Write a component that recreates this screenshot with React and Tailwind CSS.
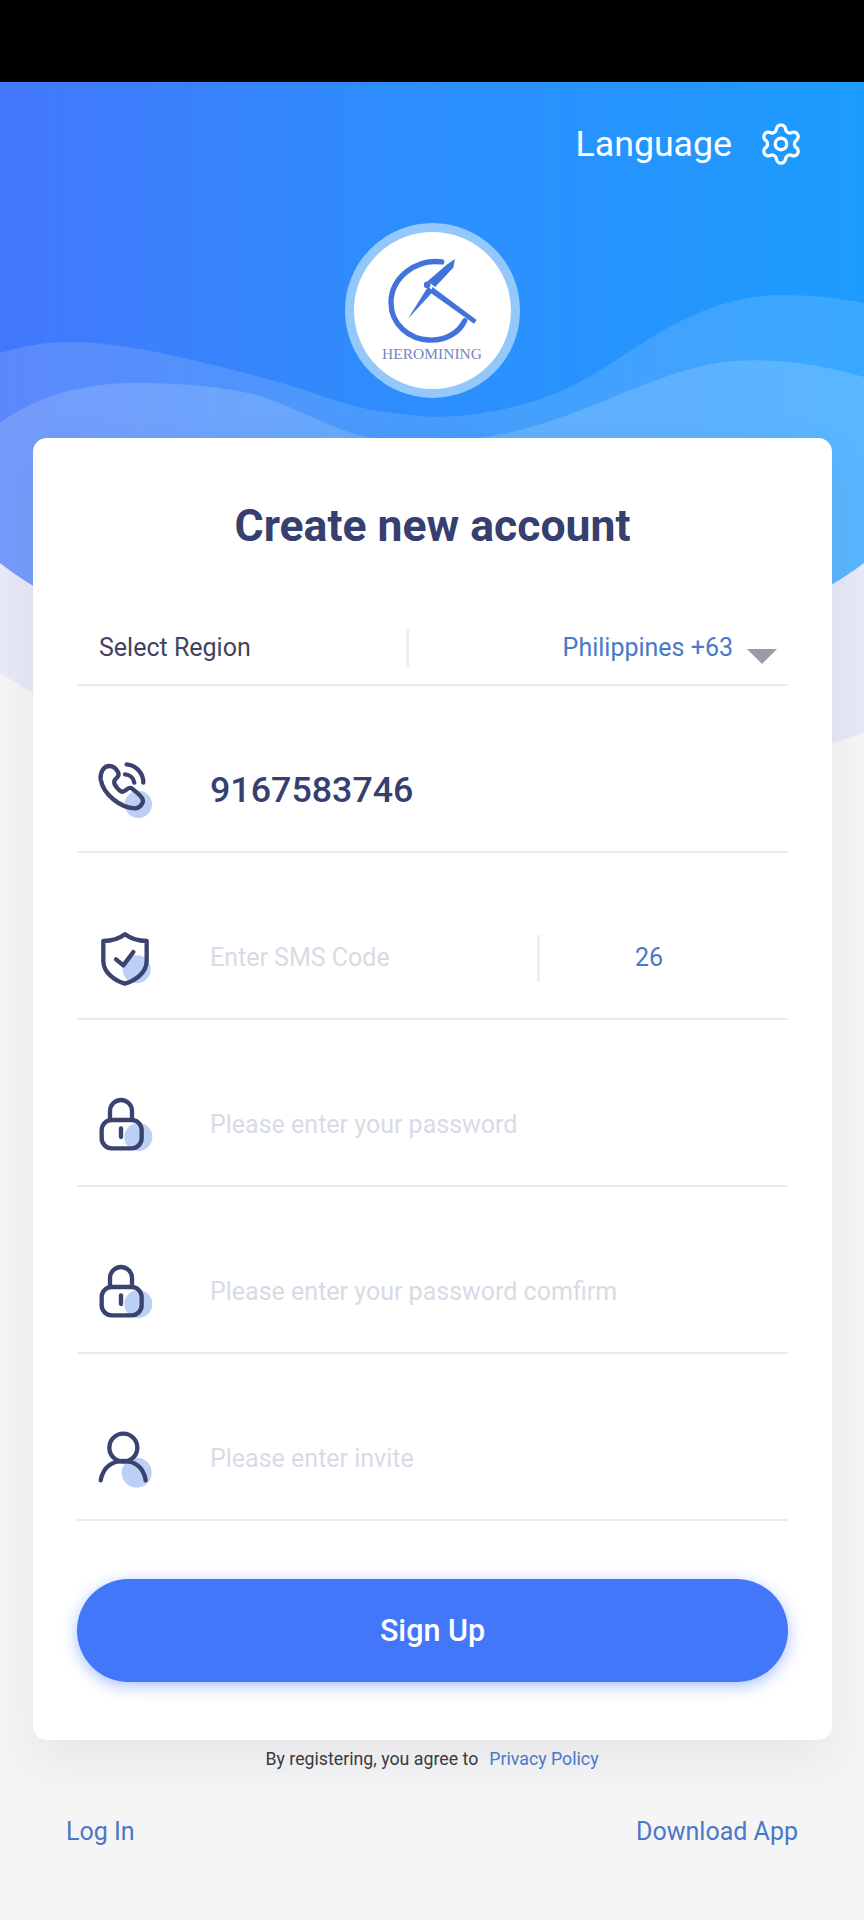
import { Settings } from 'lucide-react'

const font = { fontFamily: 'Roboto, sans-serif' }

function Waves() {
  return (
    <svg className="absolute top-0 left-0 w-[864px] h-[800px]" viewBox="0 0 864 800">
      <defs>
        <linearGradient id="head" x1="0" y1="0" x2="1" y2="0">
          <stop offset="0" stopColor="#4477fb" />
          <stop offset="0.45" stopColor="#2e8dfd" />
          <stop offset="1" stopColor="#1d9cff" />
        </linearGradient>
        <clipPath id="blue">
          <path d="M0 82H864V563C760 640 600 680 432 680C260 680 100 640 0 563Z" />
        </clipPath>
      </defs>
      <path d="M0 500H864V733L832 743C600 800 200 760 33 693L0 673Z" fill="#e7e9f6" />
      <path d="M0 82H864V563C760 640 600 680 432 680C260 680 100 640 0 563Z" fill="url(#head)" />
      <g clipPath="url(#blue)">
        <path
          d="M0 353C25 345 50 342 72 342C130 342 215 365 275 381C320 394 350 408 386 412C420 417 440 418 468 415C510 410 545 400 578 383C620 360 650 335 689 317C720 303 750 295 782 295C810 295 840 298 864 303V700H0Z"
          fill="#ffffff"
          fillOpacity="0.13"
        />
        <path
          d="M0 423C25 405 50 395 72 390C100 384 125 382 149 383C185 384 215 386 248 393C290 403 320 424 358 435C400 445 450 445 496 435C535 428 570 415 606 400C650 382 690 365 733 361C780 358 825 365 864 377V700H0Z"
          fill="#ffffff"
          fillOpacity="0.16"
        />
      </g>
    </svg>
  )
}

function Logo() {
  return (
    <div className="w-[175px] h-[175px] rounded-full bg-white border-[9px] border-[#92c8fa] flex flex-col items-center pt-[21px]">
      <svg className="w-[107px] h-[93px] shrink-0" viewBox="240 160 320 280">
        <path
          d="M428 187C350 176 275 235 275 310C275 375 330 420 390 422C440 424 480 400 497 364"
          fill="none"
          stroke="#4272dc"
          strokeWidth="16"
          strokeLinecap="round"
        />
        <path d="M467 178L463 204L408 262L385 245L442 196Z" fill="#4272dc" />
        <path d="M386 262L404 274L326 358Z" fill="#4272dc" />
        <path d="M400 262L533 362L525 373L394 280Z" fill="#4272dc" />
        <circle cx="384" cy="256" r="10" fill="#4272dc" />
      </svg>
      <span
        className="text-[15.5px] leading-[16px] text-[#7585bd] whitespace-nowrap"
        style={{ fontFamily: '"Liberation Serif", serif' }}
      >
        HEROMINING
      </span>
    </div>
  )
}

const navy = '#3a4270'
const soft = '#bcd0f6'

function PhoneIcon() {
  return (
    <svg className="w-[60px] h-[60px] shrink-0" viewBox="75 90 180 180" fill="none" stroke={navy} strokeWidth="13" strokeLinecap="round" strokeLinejoin="round">
      <circle cx="205" cy="220" r="41" fill={soft} stroke="none" />
      <path d="M118 105C100 105 90 125 92 145C100 190 150 230 195 232C210 232 222 215 218 205C215 195 195 180 185 172C175 165 165 185 155 182C145 178 130 160 133 150C136 140 150 138 145 125C140 115 130 105 118 105Z" />
      <path d="M170 100A55 55 0 0 1 220 155" />
      <path d="M165 130A30 30 0 0 1 193 155" />
    </svg>
  )
}

function ShieldIcon() {
  return (
    <svg className="w-[60px] h-[60px] shrink-0" viewBox="75 591 180 180" fill="none" stroke={navy} strokeWidth="13" strokeLinecap="round" strokeLinejoin="round">
      <circle cx="200" cy="715" r="42" fill={soft} stroke="none" />
      <path d="M165 610C145 625 125 630 100 630L100 690C100 725 135 750 165 758C195 750 230 725 230 690L230 630C205 630 185 625 165 610Z" />
      <path d="M138 685L160 703L190 663" />
    </svg>
  )
}

function LockIcon() {
  return (
    <svg className="w-[60px] h-[60px] shrink-0" viewBox="75 132 180 180" fill="none" stroke={navy} strokeWidth="13" strokeLinecap="round" strokeLinejoin="round">
      <circle cx="205" cy="258" r="42" fill={soft} stroke="none" />
      <rect x="95" y="207" width="120" height="85" rx="30" />
      <path d="M120 207V180A33 33 0 0 1 186 180V207" />
      <path d="M153 232V258" />
    </svg>
  )
}

function UserIcon() {
  return (
    <svg className="w-[60px] h-[60px] shrink-0" viewBox="75 1134 180 180" fill="none" stroke={navy} strokeWidth="13" strokeLinecap="round" strokeLinejoin="round">
      <circle cx="200" cy="1265" r="45" fill={soft} stroke="none" />
      <circle cx="160" cy="1190" r="42" />
      <path d="M92 1288C100 1245 130 1230 160 1230C190 1230 220 1245 227 1288" />
    </svg>
  )
}

function Row({ icon, placeholder, value, children }) {
  return (
    <div className="h-[167px] pt-[45px] flex items-center pl-[18px] border-b-2 border-[#ebebee]">
      {icon}
      <input
        readOnly
        value={value ?? ''}
        placeholder={placeholder}
        className={`ml-[55px] flex-1 min-w-0 bg-transparent outline-none placeholder:text-[#d8dbe6] ${value ? 'font-medium text-[35.8px] text-[#363f70]' : 'text-[25px] text-[#363f70]'}`}
      />
      {children}
    </div>
  )
}

export default function App() {
  return (
    <div className="relative w-[864px] h-[1920px] overflow-hidden bg-[#f5f5f6]" style={font}>
      <Waves />
      <div className="relative flex flex-col">
        <div className="h-[82px] bg-black" />
        <div className="h-[124px] pt-[2px] flex items-center justify-end gap-[26px] pr-[60px] text-white">
          <span className="text-[35.7px]">Language</span>
          <Settings size={46} strokeWidth={1.7} className="-mt-[2px]" />
        </div>
        <div className="mt-[17px] flex justify-center">
          <Logo />
        </div>
        <div className="mt-[40px] ml-[33px] mr-[32px] bg-white rounded-[14px] px-[44px] pt-[61px] pb-[58px] shadow-[0_20px_50px_rgba(60,60,90,0.08)]">
          <h1 className="text-center text-[44.5px] leading-[54px] font-bold text-[#363f70]">Create new account</h1>
          <div className="h-[133px] pt-[59px] flex items-center pl-[22px] pr-[11px] border-b-2 border-[#ebebee]">
            <span className="w-[307px] text-[25px] text-[#3f4460]">Select Region</span>
            <div className="w-[3px] h-[38px] bg-[#eeeef0]" />
            <span className="ml-auto text-[25px] text-[#4a78c8]">Philippines +63</span>
            <div className="ml-[14px] mt-[16px] w-0 h-0 border-x-[15px] border-x-transparent border-t-[15px] border-t-[#9a9aa8]" />
          </div>
          <Row icon={<PhoneIcon />} value="9167583746" />
          <Row icon={<ShieldIcon />} placeholder="Enter SMS Code">
            <div className="w-[3px] h-[47px] bg-[#eeeef0]" />
            <span className="w-[218px] mr-[30px] text-center text-[25px] text-[#4a78c8]">26</span>
          </Row>
          <Row icon={<LockIcon />} placeholder="Please enter your password" />
          <Row icon={<LockIcon />} placeholder="Please enter your password comfirm" />
          <Row icon={<UserIcon />} placeholder="Please enter invite" />
          <button className="mt-[58px] w-full h-[103px] rounded-full bg-[#4177f8] text-white text-[30.5px] font-medium shadow-[0_4px_16px_rgba(65,119,248,0.45)]">
            Sign Up
          </button>
        </div>
        <p className="mt-[7px] text-center text-[17.75px] leading-[24px] text-[#3a3a3f]">
          By registering, you agree to<span className="ml-[11px] text-[#4a78c8]">Privacy Policy</span>
        </p>
        <div className="mt-[46px] px-[66px] flex justify-between text-[25px] leading-[30px] text-[#4a78c8]">
          <span>Log In</span>
          <span>Download App</span>
        </div>
      </div>
    </div>
  )
}
